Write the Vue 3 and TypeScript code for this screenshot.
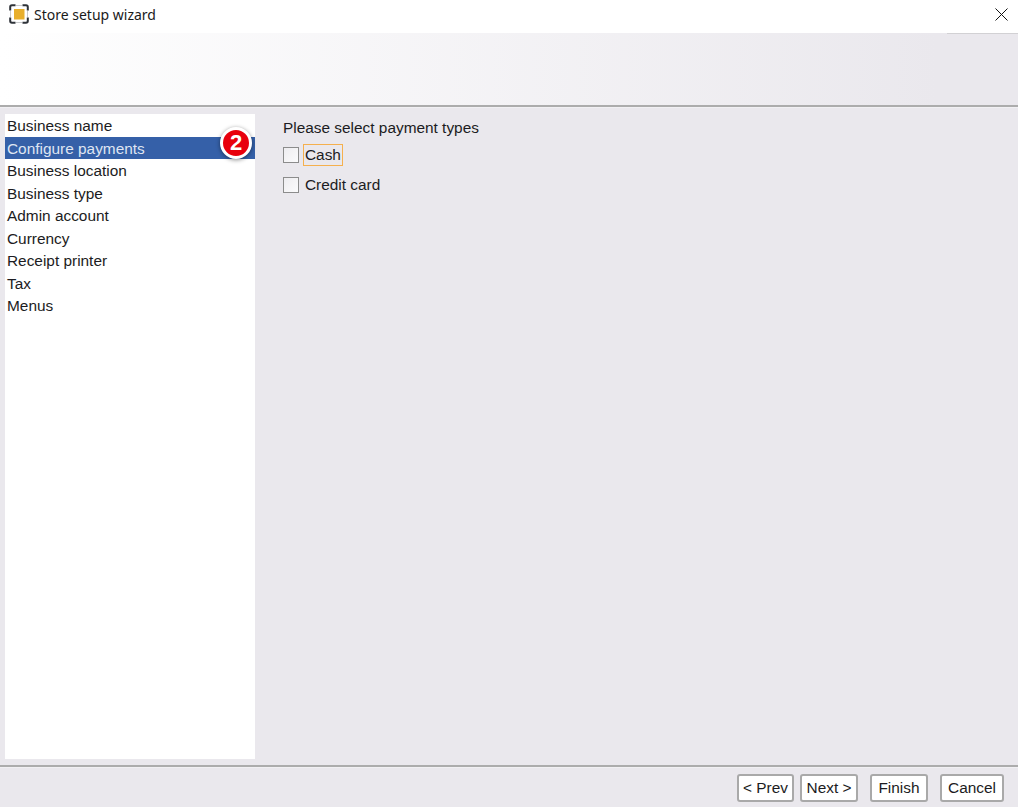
<script setup lang="ts">
const steps: string[] = ['Business name','Configure payments','Business location','Business type','Admin account','Currency','Receipt printer','Tax','Menus']
const activeIndex = 1
const payments: string[] = ['Cash','Credit card']
</script>

<template>
  <div class="window">
    <header class="titlebar">
      <svg class="logo" width="20" height="20" viewBox="0 0 20 20">
        <rect x="5" y="5" width="10.500" height="10.500" fill="#e8af2c"/>
        <path d="M7 1.500h6M7 18.500h6M1.500 7v6M18.500 7v6" fill="none" stroke="#c9cacc" stroke-width="1"/>
        <path d="M1.200 6.500V3A1.800 1.800 0 0 1 3 1.200h3.500M13.500 1.200H17A1.800 1.800 0 0 1 18.800 3v3.500M18.800 13.500V17a1.800 1.800 0 0 1-1.800 1.800h-3.500M6.500 18.800H3A1.800 1.800 0 0 1 1.200 17v-3.500" fill="none" stroke="#2e3238" stroke-width="2"/>
      </svg>
      <span class="title">Store setup wizard</span>
      <svg class="close" width="13" height="13" viewBox="0 0 13 13">
        <path d="M.5.5l12 12M12.500.5l-12 12" stroke="#111" stroke-width="1" fill="none"/>
      </svg>
    </header>
    <div class="banner"></div>
    <main class="content">
      <ul class="steps">
        <li v-for="(s, i) in steps" :key="s" class="step" :class="{ active: i === activeIndex }">
          {{ s }}
          <span v-if="i === activeIndex" class="badge">2</span>
        </li>
      </ul>
      <section class="panel">
        <p class="prompt">Please select payment types</p>
        <label v-for="(p, i) in payments" :key="p" class="check">
          <span class="box"></span>
          <span class="label" :class="{ focused: i === 0 }">{{ p }}</span>
        </label>
      </section>
    </main>
    <footer class="footer">
      <div class="group">
        <button class="btn prev">&lt; Prev</button>
        <button class="btn next">Next &gt;</button>
      </div>
      <button class="btn finish">Finish</button>
      <button class="btn cancel">Cancel</button>
    </footer>
  </div>
</template>

<style>
html, body { margin: 0; padding: 0; background: #eae8ed; }
</style>

<style scoped>
.window { width: 1018px; height: 807px; display: flex; flex-direction: column; background: #eae8ed; font-family: "Liberation Sans", Arial, sans-serif; font-size: 15.400px; color: #1c1c22; overflow: hidden; }
.titlebar { height: 33px; flex: none; background: #fff; display: flex; align-items: center; padding: 0 10px 5px 9px; box-sizing: border-box; }
.logo { flex: none; }
.title { font-family: "Noto Sans", "Open Sans", sans-serif; font-size: 14px; color: #1a1a1a; margin-left: 5px; }
.close { margin-left: auto; }
.banner { position: relative; height: 72px; flex: none; background: linear-gradient(90deg, #fff 0%, #eae8ed 92%); border-bottom: 2px solid #acacac; }
.banner::before { content: ""; position: absolute; left: 947px; right: 0; top: 0; height: 1px; background: #d2d1d4; }
.content { flex: 1; display: flex; padding: 6px 0 6px 5px; min-height: 0; border-top: 1px solid #f1f0f3; box-sizing: border-box; }
.steps { width: 250px; flex: none; background: #fff; margin: 0; padding: 0; list-style: none; }
.step { position: relative; height: 22.500px; line-height: 24px; padding-left: 2px; white-space: nowrap; }
.step.active { background: #3560a8; color: #dfe5f2; }
.badge { position: absolute; left: 215px; top: -9.500px; width: 26px; height: 26px; border: 3px solid #fff; border-radius: 50%; background: #e8000d; color: #fff; font-weight: 700; font-size: 22px; line-height: 26px; text-align: center; box-shadow: 0 1px 4px rgba(0,0,0,.45); }
.panel { padding: 3px 0 0 28px; }
.prompt { margin: 0 0 1px; line-height: 22px; }
.check { display: flex; align-items: center; height: 30px; }
.box { width: 14px; height: 14px; border: 1px solid #8c8c8c; background: linear-gradient(135deg, #eeedf0, #fbfbfc); margin-right: 4px; flex: none; }
.label { padding: 0 1px; border: 1px solid transparent; line-height: 20px; }
.label.focused { border-color: #f5b04e; }
.footer { height: 42px; flex: none; display: flex; align-items: flex-start; justify-content: flex-end; gap: 12px; padding: 7px 14px 0 0; box-sizing: border-box; border-top: 2px solid #acacac; box-shadow: inset 0 1px 0 #f1f0f3; }
.group { display: flex; gap: 6px; }
.btn { height: 28px; background: #fff; border: 2px solid #a9a9a9; border-radius: 3px; padding: 0; font: inherit; color: #1c1c22; }
.prev { width: 57px; }
.next { width: 58px; }
.finish { width: 58px; }
.cancel { width: 64px; }
</style>
